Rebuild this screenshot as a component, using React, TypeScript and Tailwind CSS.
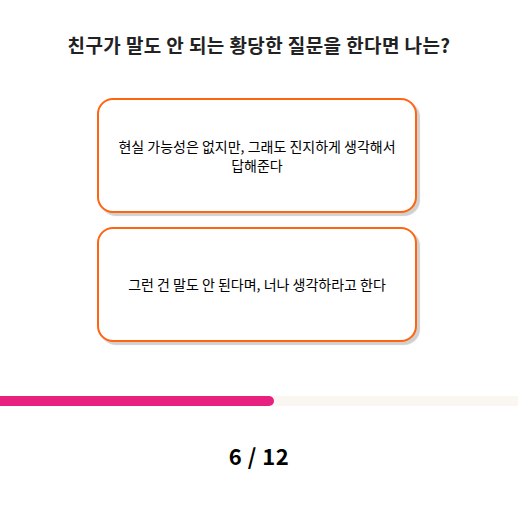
import React from 'react';

const choices = [
  '현실 가능성은 없지만, 그래도 진지하게 생각해서 답해준다',
  '그런 건 말도 안 된다며, 너나 생각하라고 한다',
];

export default function App() {
  const current = 6;
  const total = 12;

  return (
    <div className="w-[518px] h-[512px] bg-white font-['Noto_Sans_CJK_KR','Noto_Sans',sans-serif] text-[#222]">
      <h1 className="pt-[32px] text-center text-[19px] tracking-[0.4px] font-bold leading-[26px]">
        친구가 말도 안 되는 황당한 질문을 한다면 나는?
      </h1>

      <div className="mt-[40px] flex flex-col items-center gap-[14px]">
        {choices.map((c) => (
          <button
            key={c}
            className="w-[320px] h-[115px] -ml-[4px] px-[16px] rounded-[16px] border-2 border-[#ff6410] bg-white shadow-[3px_3px_1px_#d0d0d0] text-[14px] leading-[19px] text-black break-keep"
          >
            {c}
          </button>
        ))}
      </div>

      <div className="mt-[54px] h-[10px] w-full bg-[#faf6f2]">
        <div
          className="h-full rounded-r-full bg-[#e82180]"
          style={{ width: `${(274 / 518) * 100}%` }}
        />
      </div>

      <div className="mt-[33px] text-center text-[22px] tracking-[0.5px] font-bold text-black">
        {current} / {total}
      </div>
    </div>
  );
}
